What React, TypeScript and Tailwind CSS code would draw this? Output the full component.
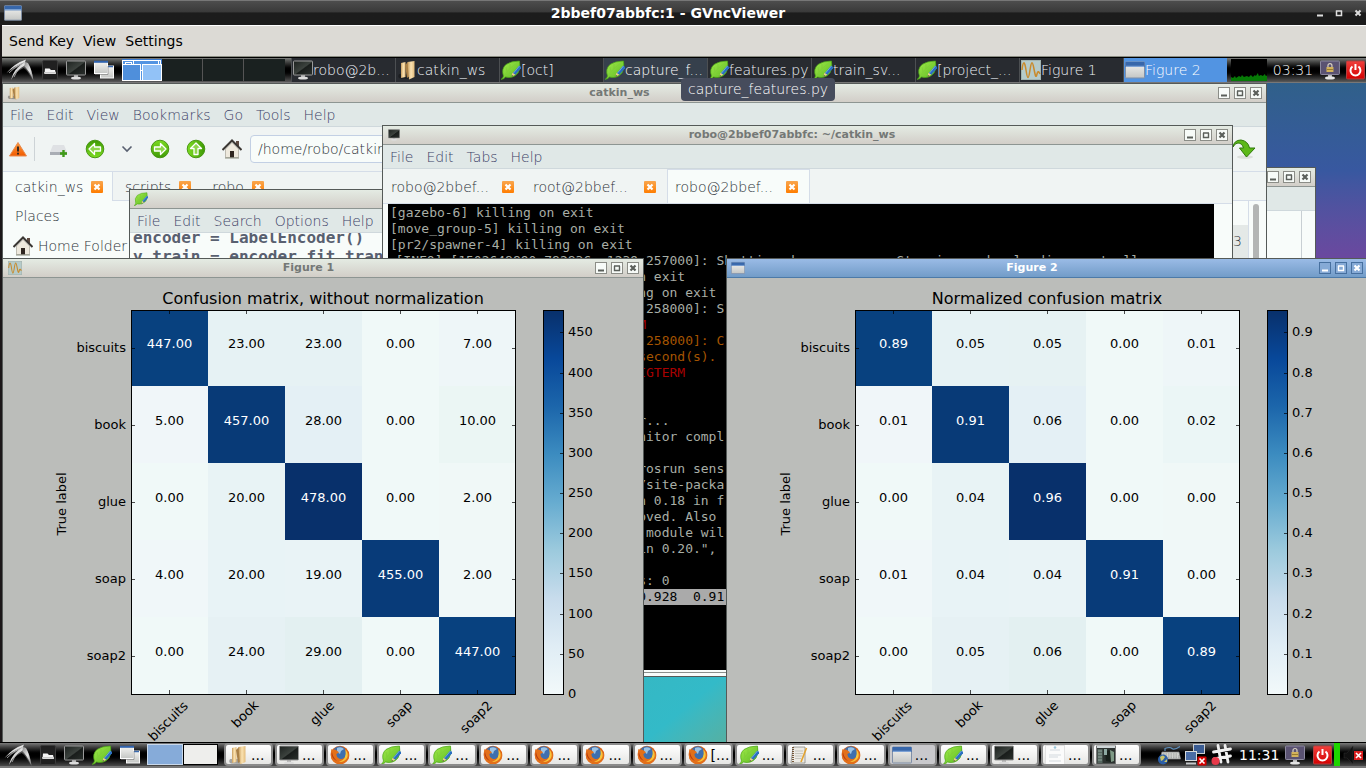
import React from "react";

type IconProps = { className?: string };

function Defs() {
  return (
    <svg className="absolute h-0 w-0" aria-hidden="true">
      <defs>
        <linearGradient id="metal" x1="0" y1="0" x2="1" y2="1">
          <stop offset="0" stopColor="#8a8a8a" />
          <stop offset="0.5" stopColor="#e6e6e6" />
          <stop offset="1" stopColor="#777" />
        </linearGradient>
        <linearGradient id="screen" x1="0" y1="0" x2="1" y2="1">
          <stop offset="0" stopColor="#1c211e" />
          <stop offset="0.5" stopColor="#3c423e" />
          <stop offset="0.55" stopColor="#191d1b" />
          <stop offset="1" stopColor="#2b302d" />
        </linearGradient>
        <linearGradient id="paper" x1="0" y1="0" x2="0" y2="1">
          <stop offset="0" stopColor="#f4f4f2" />
          <stop offset="1" stopColor="#c4c6c4" />
        </linearGradient>
        <linearGradient id="leaf" x1="0" y1="0" x2="1" y2="1">
          <stop offset="0" stopColor="#a6ee4e" />
          <stop offset="1" stopColor="#57b81e" />
        </linearGradient>
        <linearGradient id="folder" x1="0" y1="0" x2="1" y2="0">
          <stop offset="0" stopColor="#c79c5c" />
          <stop offset="0.5" stopColor="#fbe3b2" />
          <stop offset="1" stopColor="#e3bc7c" />
        </linearGradient>
        <linearGradient id="greenball" x1="0" y1="0" x2="0" y2="1">
          <stop offset="0" stopColor="#3f9a05" />
          <stop offset="1" stopColor="#7ddc22" />
        </linearGradient>
        <linearGradient id="warn" x1="0" y1="0" x2="0" y2="1">
          <stop offset="0" stopColor="#ff9a3c" />
          <stop offset="1" stopColor="#f05a00" />
        </linearGradient>
        <linearGradient id="orange" x1="0" y1="0" x2="0" y2="1">
          <stop offset="0" stopColor="#f9a64e" />
          <stop offset="1" stopColor="#ff7d00" />
        </linearGradient>
        <linearGradient id="red" x1="0" y1="0" x2="0" y2="1">
          <stop offset="0" stopColor="#f0403c" />
          <stop offset="1" stopColor="#d40000" />
        </linearGradient>
        <linearGradient id="blues" x1="0" y1="0" x2="0" y2="1">
          <stop offset="0" stopColor="#08306b" />
          <stop offset="0.125" stopColor="#08489a" />
          <stop offset="0.25" stopColor="#1c66ab" />
          <stop offset="0.375" stopColor="#3c8cc0" />
          <stop offset="0.5" stopColor="#67acd0" />
          <stop offset="0.625" stopColor="#9ccadd" />
          <stop offset="0.75" stopColor="#c8dcec" />
          <stop offset="0.875" stopColor="#e0edf5" />
          <stop offset="1" stopColor="#f2f9fa" />
        </linearGradient>
      </defs>
    </svg>
  );
}

const Swallow = ({ className = "h-6 w-7" }: IconProps) => (
  <svg className={className} viewBox="0 0 28 24" aria-hidden="true">
    <path d="M20 1.500Q9 5 0.500 15Q6 11 12 9.500Q7 14 5 22Q10 13 17.500 10Q20 11 23 16L27.500 23Q26 10 21.500 5Z" fill="#4f4f4f" />
    <path d="M20 1.500Q9 5 0.500 15Q8 8 19 4Z" fill="url(#metal)" />
    <path d="M19 4Q8 10 5 22Q10 11 20 7Z" fill="url(#metal)" />
    <path d="M19 4L22 5Q26 12 27.500 23Q23 12 18 8Z" fill="url(#metal)" />
    <path d="M3 15Q9 8 19 4M8 19Q12 10 19 6" stroke="#d8d8d8" strokeWidth="0.700" fill="none" />
  </svg>
);

const FileManager = ({ className = "h-5 w-4" }: IconProps) => (
  <svg className={className} viewBox="0 0 16 20" aria-hidden="true">
    <rect x="0.500" y="0.500" width="15" height="19" rx="1.500" fill="#202020" stroke="#3b3b3b" />
    <path d="M3 8.500h4.500l1.500 1.500h4l1 4H2.500z" fill="#f4f4f4" />
    <path d="M2 12.800h12" stroke="#c8c8c8" strokeWidth="1.500" />
  </svg>
);

const Monitor = ({ className = "h-5 w-5" }: IconProps) => (
  <svg className={className} viewBox="0 0 20 20" aria-hidden="true">
    <rect x="0.500" y="1" width="19" height="14" rx="0.800" fill="url(#screen)" stroke="#9a9a9a" />
    <path d="M8 15h4v2.500H8z" fill="#aaa" />
    <ellipse cx="10" cy="18" rx="5" ry="1.600" fill="#dcdcdc" />
  </svg>
);

const LockScreen = ({ className = "h-5 w-5" }: IconProps) => (
  <svg className={className} viewBox="0 0 20 20" aria-hidden="true">
    <rect x="0.500" y="1" width="19" height="13.500" rx="0.800" fill="#5a5272" stroke="#8d8aa0" />
    <path d="M8 15h4v2.500H8z" fill="#bbb" />
    <ellipse cx="10" cy="18" rx="5" ry="1.600" fill="#e4e4e4" />
    <path d="M8 7.500V5.500a2 2 0 0 1 4 0v2" fill="none" stroke="#d9d2c0" strokeWidth="1.200" />
    <rect x="6.500" y="7" width="7" height="5" fill="#d3b35c" />
    <path d="M7 9.500h6" stroke="#8a6c22" strokeWidth="0.800" />
  </svg>
);

const Windows = ({ className = "h-5 w-5" }: IconProps) => (
  <svg className={className} viewBox="0 0 20 20" aria-hidden="true">
    <rect x="6.500" y="6" width="13" height="12" fill="url(#paper)" stroke="#fafafa" />
    <path d="M7 6.500h12" stroke="#3a6ab0" strokeWidth="1.500" />
    <rect x="0.500" y="1.500" width="13" height="12" fill="url(#paper)" stroke="#fdfdfd" />
    <path d="M0 1.800h14" stroke="#2f62ad" strokeWidth="2" />
    <path d="M1 14.500h13V6" stroke="#777" fill="none" strokeWidth="0.600" />
  </svg>
);

const AppWindow = ({ className = "h-5 w-5" }: IconProps) => (
  <svg className={className} viewBox="0 0 20 20" aria-hidden="true">
    <rect x="0.500" y="2" width="19" height="16" rx="0.600" fill="url(#paper)" stroke="#7f8fa8" />
    <rect x="0.500" y="2" width="19" height="5" fill="#3767ab" />
    <path d="M1 6.300h18" stroke="#8fb2e0" />
  </svg>
);

const Leaf = ({ className = "h-5 w-5" }: IconProps) => (
  <svg className={className} viewBox="0 0 20 20" aria-hidden="true">
    <path d="M0 19.500Q2 18 2.500 16Q0 9 5 4.500Q10 1 18.500 1Q20 8 17 13Q12 19 4.500 17Q3 19 0 19.500Z" fill="url(#leaf)" stroke="#49a315" strokeWidth="0.700" />
    <path d="M3 16Q7 9 17 2M6 12L5 7M9 9V4M8 12h6M5.500 14.500h5" stroke="#7fcb38" strokeWidth="0.700" fill="none" />
    <path d="M19.500 6.500L13 14" stroke="#2b6fc2" strokeWidth="3" />
    <path d="M18.500 6L12.500 13" stroke="#79aee8" strokeWidth="0.800" />
    <path d="M11.500 12.800L10.500 16.500L14.200 14.800Z" fill="#eccb92" />
    <path d="M10.500 16.500l.5-1.600 1.100 1z" fill="#333" />
  </svg>
);

const Folder = ({ className = "h-5 w-5" }: IconProps) => (
  <svg className={className} viewBox="0 0 20 20" aria-hidden="true">
    <path d="M2 14Q0 17 3 18.500L14 19V14Z" fill="#000" opacity="0.300" />
    <path d="M4 3L8.500 2V17L4 18Z" fill="url(#folder)" />
    <path d="M8 5l3-3 2 14-3 2z" fill="#a98046" />
    <path d="M10.500 2L17.500 1V17L12 19.500Z" fill="url(#folder)" />
  </svg>
);

const Sine = ({ className = "h-5 w-5" }: IconProps) => (
  <svg className={className} viewBox="0 0 20 20" aria-hidden="true">
    <rect x="0.500" y="0.500" width="19" height="19" fill="#b5cbca" stroke="#a3b4b0" />
    <path d="M1 10C2 1 3.500 0 5 10S7.500 20 9 10S11.500 1 13 9S15 18 16 14S18 12 19 14" stroke="#c98a2b" strokeWidth="1.500" fill="none" />
  </svg>
);

const Power = ({ className = "h-5 w-5" }: IconProps) => (
  <svg className={className} viewBox="0 0 20 20" aria-hidden="true">
    <rect x="0.500" y="1" width="18" height="18" rx="1" fill="url(#red)" stroke="#b34140" />
    <path d="M6.500 6.500a5 5 0 1 0 6 0" stroke="#fff" strokeWidth="2" fill="none" />
    <path d="M9.500 4v6" stroke="#fff" strokeWidth="2" />
  </svg>
);

const Firefox = ({ className = "h-5 w-5" }: IconProps) => (
  <svg className={className} viewBox="0 0 20 20" aria-hidden="true">
    <circle cx="10" cy="10" r="9.300" fill="#dd6312" />
    <circle cx="9.600" cy="8" r="6.800" fill="#3f6fae" />
    <path d="M7 3q4-2 7 1l-3 2-1 3-3-2z" fill="#9cc4e6" />
    <path d="M1.500 4Q3 5 5 4.500Q8 6 9 7.500L6.500 9Q6 12 9 13.500Q13 15 15.500 12Q17 8 15 4Q20 8 19 12.500Q16 19 9.500 19.200Q2 18 1 11Q.5 7 1.500 4Z" fill="#e3701a" />
    <path d="M15.500 4.500Q19 9 17 13Q14 17.500 9 17Q17 15 15.500 4.500Z" fill="#f8c53a" />
    <path d="M2 7Q3 13 7 16Q2 14 1.500 9Z" fill="#b93b10" />
  </svg>
);

const Notepad = ({ className = "h-5 w-5" }: IconProps) => (
  <svg className={className} viewBox="0 0 20 20" aria-hidden="true">
    <path d="M3 2h12v16H1z" fill="#eceae4" stroke="#8b8b86" strokeWidth="0.800" />
    <path d="M3 2v16" stroke="#6b4a2a" strokeWidth="1.800" strokeDasharray="1 1" />
    <path d="M5 6h8M5 8.500h8M5 11h7M5 13.500h6" stroke="#bcbcb4" strokeWidth="0.800" />
    <path d="M16.500 3L11 17" stroke="#e2a32f" strokeWidth="1.600" />
  </svg>
);

const PageDoc = ({ className = "h-5 w-5" }: IconProps) => (
  <svg className={className} viewBox="0 0 20 20" aria-hidden="true">
    <rect x="0.500" y="0.500" width="19" height="19" fill="#fbfbfb" stroke="#e2e2e2" />
    <circle cx="10" cy="2.500" r="1.300" fill="#9cc8dc" />
    <path d="M5 5h10M4 10h12M4 12h9M4 16h12" stroke="#c3ccd2" strokeWidth="0.700" />
  </svg>
);

const Viewer = ({ className = "h-5 w-5" }: IconProps) => (
  <svg className={className} viewBox="0 0 20 20" aria-hidden="true">
    <rect x="0.500" y="1" width="19" height="18" fill="#2c3230" stroke="#777" />
    <path d="M1 2h18" stroke="#cfd6d8" strokeWidth="2" />
    <path d="M1.500 4h5v14h-5z" fill="#55665f" />
    <path d="M2 6h4M2 9h4M2 12h4M2 15h4" stroke="#9fb3aa" strokeWidth="0.800" />
    <path d="M9 7l4-2 3 3-1 9-5-1z" fill="#18201b" />
    <path d="M14 5l4 2v9l-3 1z" fill="#7f9a86" />
    <path d="M8 4h3v6H8z" fill="#8ea9a2" />
  </svg>
);

const Keyboard = ({ className = "h-5 w-6" }: IconProps) => (
  <svg className={className} viewBox="0 0 24 20" aria-hidden="true">
    <path d="M8 6V3.500q5-2 7 0t8-2" stroke="#5f8fbd" strokeWidth="1.200" fill="none" />
    <path d="M5 7h17l1.500 7H3z" fill="#cfd1cd" stroke="#888" strokeWidth="0.700" />
    <path d="M6 9h15M6 11h16M6 12.800h17" stroke="#8a8a8a" strokeWidth="0.700" strokeDasharray="1.500 1" />
    <circle cx="6" cy="14.500" r="5" fill="#2b5ea6" />
    <path d="M3 12q3-3 5 0l-2 3-2 1zM7 17l3-3 0 3z" fill="#c9c46a" />
  </svg>
);

const Network = ({ className = "h-6 w-6" }: IconProps) => (
  <svg className={className} viewBox="0 0 24 24" aria-hidden="true">
    <rect x="10.500" y="1.500" width="11" height="9" fill="#3a5c93" stroke="#c9cdd0" />
    <rect x="2.500" y="8.500" width="11" height="9" fill="#4a6da6" stroke="#d5d9dc" />
    <path d="M3 19.500h10v2H3z" fill="#c6c9cb" />
    <rect x="14.500" y="13.500" width="9" height="9" rx="1" fill="#d40000" />
    <path d="M16.500 15.500l5 5M21.500 15.500l-5 5" stroke="#fff" strokeWidth="1.600" />
  </svg>
);

const Hash = ({ className = "h-6 w-6" }: IconProps) => (
  <svg className={className} viewBox="0 0 24 24" aria-hidden="true">
    <path d="M9 2.500l3 16.500M16 2.500l3 16.500M4.500 9l17-3M5 16l16.500-3" stroke="#efefef" strokeWidth="2.800" strokeLinecap="round" />
    <circle cx="6.500" cy="18" r="4" fill="#e8394a" />
  </svg>
);

const Muted = ({ className = "h-5 w-5" }: IconProps) => (
  <svg className={className} viewBox="0 0 20 20" aria-hidden="true">
    <path d="M1 8h3l6-7v18l-6-6H1z" fill="#101010" stroke="#333" strokeWidth="0.500" />
    <rect x="11" y="6" width="9" height="9" fill="#d81e1e" />
    <path d="M13 8l5 5M18 8l-5 5" stroke="#fff" strokeWidth="1.600" />
  </svg>
);

const House = ({ className = "h-5 w-5" }: IconProps) => (
  <svg className={className} viewBox="0 0 20 20" aria-hidden="true">
    <path d="M14 2h3v6l-3-3z" fill="#5f4a40" />
    <path d="M3.500 10L10 3.500L16.500 10V18.500H3.500Z" fill="#eee9dd" stroke="#a8a498" strokeWidth="0.700" />
    <path d="M0.500 11L10 1.500L19.500 11" fill="none" stroke="#3a3632" strokeWidth="2" />
    <rect x="8" y="12" width="4" height="6.500" fill="#2f2620" />
    <path d="M3 19h14" stroke="#8b8f80" />
  </svg>
);

function RoundArrow({ turn = "" }: { turn?: string }) {
  return (
    <svg className={"h-5 w-5 " + turn} viewBox="0 0 20 20" aria-hidden="true">
      <circle cx="10" cy="10" r="8.800" fill="url(#greenball)" stroke="#3f8f0a" strokeWidth="0.900" />
      <path d="M4 10l5.500-5.500v3.500h6v4h-6v3.500z" fill="#8fd64a" stroke="#fff" strokeWidth="1.300" strokeLinejoin="round" />
    </svg>
  );
}

const Warning = () => (
  <svg className="h-5 w-5" viewBox="0 0 20 20" aria-hidden="true">
    <path d="M10 3.500L18.500 17H1.500Z" fill="url(#warn)" stroke="#e98a4c" />
    <path d="M10 7.500v5M10 13.800v1.800" stroke="#222" strokeWidth="1.800" />
  </svg>
);

const NewTab = () => (
  <svg className="h-5 w-5" viewBox="0 0 20 20" aria-hidden="true">
    <path d="M4 6h11l3 7H1z" fill="#dfe1e4" />
    <path d="M1 13h17v3H1z" fill="#a9adb4" />
    <path d="M14.500 11v7M11 14.500h7" stroke="#3f9a17" strokeWidth="2.400" />
  </svg>
);

const Chevron = () => (
  <svg className="h-3 w-3" viewBox="0 0 12 12" aria-hidden="true">
    <path d="M1.500 3.500L6 8L10.500 3.500" stroke="#596070" strokeWidth="1.600" fill="none" />
  </svg>
);

const GoArrow = () => (
  <svg className="h-5 w-6" viewBox="0 0 24 20" aria-hidden="true">
    <ellipse cx="13" cy="18" rx="8" ry="1.800" fill="#dcdfdc" />
    <path d="M1 8Q2 1 9 1Q16 2 17.500 9H23L14.500 18L7.500 9H11.500Q10 4 6 4Q3 4 1 8Z" fill="#5cb818" stroke="#2f7a08" />
  </svg>
);

const CloseTab = () => (
  <svg className="h-3 w-3" viewBox="0 0 12 12" aria-hidden="true">
    <rect width="12" height="12" rx="1" fill="url(#orange)" />
    <path d="M3.500 3.500l5 5M8.500 3.500l-5 5" stroke="#fff" strokeWidth="2.200" />
  </svg>
);

const light = "font-['DejaVu_Sans_Light','DejaVu_Sans',sans-serif] font-extralight";

function WindowButtons({ active = false }: { active?: boolean }) {
  const tone = active ? "border-[#47709f] text-white bg-[#86aad6]" : "border-[#8b8d87] text-[#5a5f5a] bg-[#f7fbf8]";
  return (
    <div className="flex gap-1">
      <button aria-label="Minimize" className={"flex h-3 w-3 items-center justify-center border " + tone}>
        <svg viewBox="0 0 10 10" className="h-full w-full"><path d="M2 7.500h6" stroke="currentColor" strokeWidth="2" /></svg>
      </button>
      <button aria-label="Maximize" className={"flex h-3 w-3 items-center justify-center border " + tone}>
        <svg viewBox="0 0 10 10" className="h-full w-full"><path d="M2.500 3v4.500h5V3M2 3h6" stroke="currentColor" fill="none" strokeWidth="1.400" /></svg>
      </button>
      <button aria-label="Close" className={"flex h-3 w-3 items-center justify-center border " + tone}>
        <svg viewBox="0 0 10 10" className="h-full w-full"><path d="M2.500 2.500l5 5M7.500 2.500l-5 5" stroke="currentColor" strokeWidth="2.200" /></svg>
      </button>
    </div>
  );
}

function TitleBar({ title, icon, active = false }: { title: string; icon: React.ReactNode; active?: boolean }) {
  return (
    <div
      className={
        "flex h-[19px] shrink-0 items-center border-b pr-1 pl-1 font-['DejaVu_Sans',sans-serif] text-[11px] font-bold " +
        (active
          ? "border-[#4c7aa8] bg-linear-to-b from-[#9abbe6] to-[#729cc8] text-white"
          : "border-[#8d9592] bg-linear-to-b from-[#e4ebe3] to-[#d2cec8] text-[#747876]")
      }
    >
      {icon}
      <div className="flex-1 truncate text-center leading-4">{title}</div>
      <WindowButtons active={active} />
    </div>
  );
}

function MenuBar({ items }: { items: string[] }) {
  return (
    <div className={"flex h-6 shrink-0 items-center gap-[13px] border-b border-[#cfd8dc] bg-[#e0e8e7] px-[7px] text-sm text-[#3c4166] " + light}>
      {items.map((m) => (
        <button key={m}>{m}</button>
      ))}
    </div>
  );
}

function LauncherTask({ icon, label, tone = "bg-[#282b30] text-[#eef3f8]" }: { icon: React.ReactNode; label: string; tone?: string }) {
  return (
    <button className={"flex min-w-0 flex-1 items-center border-l border-[#4c4f52] pl-px text-left text-sm " + tone}>
      <span className="shrink-0">{icon}</span>
      <span className="whitespace-nowrap">{label}</span>
    </button>
  );
}

function VncPanel() {
  return (
    <div className={"relative z-10 flex h-[26px] shrink-0 items-stretch border-t border-b border-t-black border-b-[#777] bg-linear-to-b from-[#7a7c7a] via-black via-50% to-[#5a5a5a] " + light}>
      <div className="flex w-[120px] items-center gap-2 pl-1">
        <Swallow />
        <FileManager />
        <Monitor />
        <Windows />
      </div>
      <div className="my-px flex">
        <svg className="h-[22px] w-10 bg-[#3b7bd0]" viewBox="0 0 40 22" aria-label="Desktop 1">
          <rect x="0.500" y="1.500" width="38" height="20" fill="#5294e2" stroke="#fff" />
          <rect x="11.500" y="1.500" width="25" height="10" fill="#5294e2" stroke="#fff" />
          <rect x="3.500" y="3.500" width="6" height="4" fill="#5294e2" stroke="#fff" />
          <rect x="0.500" y="5.500" width="18" height="16" fill="#4f8fdb" stroke="#fff" />
          <rect x="20.500" y="5.500" width="19" height="16" fill="#92c2f7" stroke="#fff" />
        </svg>
        <div className="w-[41px] border-r border-[#555] bg-[#1a2120]" />
        <div className="w-[41px] border-r border-[#555] bg-[#1a2120]" />
        <div className="w-[41px] bg-[#1a2120]" />
      </div>
      <div className="ml-[6px] flex flex-1">
        <LauncherTask icon={<Monitor />} label="robo@2b..." />
        <LauncherTask icon={<Folder />} label="catkin_ws" />
        <LauncherTask icon={<Leaf />} label="[oct]" />
        <LauncherTask icon={<Leaf />} label="capture_f..." tone="bg-[#36404c] text-white" />
        <LauncherTask icon={<Leaf />} label="features.py" />
        <LauncherTask icon={<Leaf />} label="train_sv..." />
        <LauncherTask icon={<Leaf />} label="[project_..." />
        <LauncherTask icon={<Sine />} label="Figure 1" />
        <LauncherTask icon={<AppWindow />} label="Figure 2" tone="bg-[#5294e2] text-white" />
      </div>
      <div className="flex w-[139px] items-center gap-[6px] pl-1 text-sm text-white">
        <svg className="h-[22px] w-9 bg-black" viewBox="0 0 36 22" aria-label="CPU usage">
          <path d="M0 22V18l2 1 2-2 1 2 3-2 2 1 1-2 2 2 3-1 2 1 2-2 2 2 2-2 1 1 2-3 1 3 2-1 2 1 2-2 1 2 2-1V22Z" fill="#067a06" />
        </svg>
        <span>03:31</span>
        <LockScreen className="ml-px h-5 w-5" />
        <Power />
      </div>
      <div className="absolute top-5 left-[679px] rounded-sm bg-[#464c5c] px-[7px] text-sm leading-[23px] text-white">
        capture_features.py
      </div>
    </div>
  );
}

type TermLine = { lead?: string; text: string; tone?: string };

const terminalLines: TermLine[] = [
  { text: "[gazebo-6] killing on exit" },
  { text: "[move_group-5] killing on exit" },
  { text: "[pr2/spawner-4] killing on exit" },
  { lead: "[INFO] [1502648890.782836, 1239.", text: "257000]: Shutting down spawner. Stopping and unloading controllers" },
  { lead: "n", text: " exit" },
  { lead: "n", text: "g on exit" },
  { lead: ".", text: "258000]: S" },
  { lead: "M", text: "", tone: "text-[#a80000]" },
  { lead: ".", text: "258000]: C", tone: "text-[#a55400]" },
  { lead: "s", text: "econd(s).", tone: "text-[#a55400]" },
  { lead: "I", text: "GTERM", tone: "text-[#a80000]" },
  { text: "" },
  { text: "" },
  { lead: "r", text: "..." },
  { lead: "n", text: "itor compl" },
  { text: "" },
  { lead: "r", text: "osrun sens" },
  { lead: "/", text: "site-packa" },
  { lead: "n", text: " 0.18 in f" },
  { lead: "o", text: "ved. Also " },
  { lead: " ", text: "module wil" },
  { lead: "i", text: "n 0.20.\"," },
  { text: "" },
  { lead: "s", text: ": 0" },
  { lead: "0", text: ".928  0.91", tone: "bg-[#aaaaaa] text-black" },
];

function Terminal() {
  return (
    <section className="absolute top-[42px] left-[380px] flex h-[552px] w-[851px] flex-col border border-[#555a58] bg-[#f8fcfa]">
      <TitleBar title="robo@2bbef07abbfc: ~/catkin_ws" icon={<Monitor className="ml-px h-3 w-3" />} />
      <MenuBar items={["File", "Edit", "Tabs", "Help"]} />
      <div className={"flex h-[35px] shrink-0 items-stretch border-b border-[#d5dde8] bg-[#f0f4f3] text-sm text-[#2c3238] " + light}>
        <div className="flex w-[142px] items-center justify-between pt-[2px] pr-[11px] pl-2">
          <button>robo@2bbef...</button>
          <button aria-label="Close tab"><CloseTab /></button>
        </div>
        <div className="flex w-[142px] items-center justify-between pt-[2px] pr-[11px] pl-2">
          <button>root@2bbef...</button>
          <button aria-label="Close tab"><CloseTab /></button>
        </div>
        <div className="flex w-[143px] items-center justify-between border border-b-0 border-[#d5dde8] bg-[#f8fcfa] pr-[11px] pl-[7px]">
          <button>robo@2bbef...</button>
          <button aria-label="Close tab"><CloseTab /></button>
        </div>
      </div>
      <pre className="mr-[18px] ml-[5px] h-[466px] overflow-hidden bg-black pt-px pl-[2px] font-['DejaVu_Sans_Mono',monospace] text-[13px] leading-4 text-[#a8aea6]">
        {terminalLines.map((l, i) => (
          <div key={i} className={"flex h-4 " + (l.tone ?? "")}>
            {l.lead !== undefined && <span className="w-64 shrink-0 text-right">{l.lead}</span>}
            <span>{l.text}</span>
          </div>
        ))}
      </pre>
      <div className="mt-[2px] border-t border-[#8a8f8c]" />
    </section>
  );
}

function Editor() {
  return (
    <section className="absolute top-[106px] left-[127px] h-[300px] w-[400px] border border-[#555a58] bg-[#f8fcfa]">
      <TitleBar title="" icon={<Leaf className="h-[14px] w-[14px]" />} />
      <MenuBar items={["File", "Edit", "Search", "Options", "Help"]} />
      <div className="overflow-hidden">
        <pre className="-mt-[5px] pl-[3px] font-['DejaVu_Sans_Mono',monospace] text-base leading-[19px] font-bold text-[#596070]">
          {"encoder = LabelEncoder()\ny_train = encoder.fit_transform(y_train)"}
        </pre>
      </div>
    </section>
  );
}

function FileManagerWindow() {
  return (
    <section className={"absolute top-0 left-0 flex h-[500px] w-[1265px] flex-col border border-[#555a58] bg-[#f8fcfa] text-sm text-[#2c3238] " + light}>
      <TitleBar title="catkin_ws" icon={<Folder className="h-[14px] w-[14px]" />} />
      <MenuBar items={["File", "Edit", "View", "Bookmarks", "Go", "Tools", "Help"]} />
      <div className="flex h-[45px] shrink-0 items-center border-b border-[#d5dde8] bg-[#f0f4f3] pr-[10px] pl-[5px]">
        <button aria-label="Root warning"><Warning /></button>
        <div className="mx-[6px] h-6 w-px bg-[#cdd3d6]" />
        <button aria-label="New tab" className="ml-2"><NewTab /></button>
        <button aria-label="Back" className="ml-4"><RoundArrow /></button>
        <button aria-label="History" className="ml-4"><Chevron /></button>
        <button aria-label="Forward" className="ml-[17px]"><RoundArrow turn="rotate-180" /></button>
        <button aria-label="Up" className="ml-4"><RoundArrow turn="rotate-90" /></button>
        <button aria-label="Home" className="ml-4"><House /></button>
        <input aria-label="Location" defaultValue="/home/robo/catkin_ws" className="ml-2 h-7 min-w-0 flex-1 rounded-sm border border-[#c3d0e4] bg-[#f8fcfa] px-[7px]" />
        <button aria-label="Go" className="ml-2"><GoArrow /></button>
      </div>
      <div className="flex h-[29px] shrink-0 bg-[#f0f4f3]">
        <div className="flex w-[110px] items-center justify-between border-r border-[#d5dde8] bg-[#f8fcfa] pr-[9px] pl-3">
          <button>catkin_ws</button>
          <button aria-label="Close tab"><CloseTab /></button>
        </div>
        <div className="flex items-center gap-2 border-b border-[#d5dde8] pt-px pl-3">
          <button>scripts</button>
          <button aria-label="Close tab"><CloseTab /></button>
        </div>
        <div className="flex flex-1 items-center gap-2 border-b border-[#d5dde8] pt-px pl-[21px]">
          <button>robo</button>
          <button aria-label="Close tab"><CloseTab /></button>
        </div>
      </div>
      <div className="flex flex-1">
        <div className="flex-1">
          <div className="pl-3 leading-[30px]">Places</div>
          <button className="flex h-[30px] items-center gap-[5px] pl-[10px]">
            <House />
            Home Folder
          </button>
        </div>
        <div className="w-[16px] pl-px">
          <div className="h-6" />
          <div className="h-10 bg-[#e4e9e7] leading-[32px]">3</div>
        </div>
        <div className="w-[18px] border-l border-[#d5dde8] pt-[3px] pl-1">
          <div className="h-60 w-[6px] rounded-full bg-[#b3b5b4]" />
        </div>
      </div>
    </section>
  );
}

function BackWindow() {
  return (
    <section className="absolute top-[84px] left-[900px] flex h-[300px] w-[414px] flex-col border border-[#555a58] bg-[#f8fcfa]">
      <TitleBar title="" icon={<Leaf className="h-[14px] w-[14px]" />} />
      <MenuBar items={[]} />
      <div className="mr-[13px] flex-1 border-r border-[#c8cfd3]" />
    </section>
  );
}

type Cell = { v: string; c: string };
type Figure = { title: string; cells: Cell[][]; ticks: { label: string; y: number }[] };

const labels = ["biscuits", "book", "glue", "soap", "soap2"];
const labelDrop = [22, 15, 14, 15, 18];

const W = "#f0f9f8";
const figure1: Figure = {
  title: "Confusion matrix, without normalization",
  cells: [
    [{ v: "447.00", c: "#08417f" }, { v: "23.00", c: "#e6f2f4" }, { v: "23.00", c: "#e6f2f4" }, { v: "0.00", c: W }, { v: "7.00", c: "#eef6f8" }],
    [{ v: "5.00", c: "#f0f6f9" }, { v: "457.00", c: "#083a77" }, { v: "28.00", c: "#e4f0f5" }, { v: "0.00", c: W }, { v: "10.00", c: "#ebf6f4" }],
    [{ v: "0.00", c: W }, { v: "20.00", c: "#e8f3f5" }, { v: "478.00", c: "#08306b" }, { v: "0.00", c: W }, { v: "2.00", c: "#f0f8f7" }],
    [{ v: "4.00", c: "#f0f7f9" }, { v: "20.00", c: "#e8f3f6" }, { v: "19.00", c: "#e9f3f6" }, { v: "455.00", c: "#083b79" }, { v: "2.00", c: "#f0f8f8" }],
    [{ v: "0.00", c: W }, { v: "24.00", c: "#e6f1f4" }, { v: "29.00", c: "#e3f0f1" }, { v: "0.00", c: W }, { v: "447.00", c: "#08417f" }],
  ],
  ticks: [450, 400, 350, 300, 250, 200, 150, 100, 50, 0].map((n) => ({ label: String(n), y: Math.round(416 - (n * 384) / 478) })),
};

const figure2: Figure = {
  title: "Normalized confusion matrix",
  cells: [
    [{ v: "0.89", c: "#08417f" }, { v: "0.05", c: "#e6f2f4" }, { v: "0.05", c: "#e6f2f3" }, { v: "0.00", c: W }, { v: "0.01", c: "#eef6f8" }],
    [{ v: "0.01", c: "#f0f6f9" }, { v: "0.91", c: "#083a77" }, { v: "0.06", c: "#e4f0f5" }, { v: "0.00", c: W }, { v: "0.02", c: "#ebf6f6" }],
    [{ v: "0.00", c: W }, { v: "0.04", c: "#e8f3f5" }, { v: "0.96", c: "#08306b" }, { v: "0.00", c: W }, { v: "0.00", c: "#f0f8f7" }],
    [{ v: "0.01", c: "#f0f7f9" }, { v: "0.04", c: "#e8f3f6" }, { v: "0.04", c: "#e9f3f6" }, { v: "0.91", c: "#083b79" }, { v: "0.00", c: "#f0f8f8" }],
    [{ v: "0.00", c: W }, { v: "0.05", c: "#e6f1f4" }, { v: "0.06", c: "#e3f0f1" }, { v: "0.00", c: W }, { v: "0.89", c: "#08417f" }],
  ],
  ticks: [9, 8, 7, 6, 5, 4, 3, 2, 1, 0].map((n) => ({ label: (n / 10).toFixed(1), y: Math.round(416 - (n * 38.4) / 0.956) })),
};

function Matrix({ figure }: { figure: Figure }) {
  return (
    <svg className="h-[465px] w-[640px] shrink-0 font-['DejaVu_Sans',sans-serif] text-[13px]" viewBox="0 0 640 465" role="img" aria-label={figure.title}>
      <text x="320" y="26" textAnchor="middle" className="text-base">{figure.title}</text>
      {figure.cells.map((row, r) =>
        row.map((cell, c) => (
          <g key={r + "-" + c}>
            <rect x={128 + c * 77} y={31 + r * 77} width="77" height="77" fill={cell.c} shapeRendering="crispEdges" />
            <text x={166.5 + c * 77} y={70 + r * 77} textAnchor="middle" fill={r === c ? "#fff" : "#000"}>{cell.v}</text>
          </g>
        ))
      )}
      <path d="M127 30h386v2H127z" fill="#bbbdba" />
      <rect x="128.500" y="32.500" width="384" height="384" fill="none" stroke="#000" />
      {labels.map((l, i) => (
        <g key={l}>
          <path
            d={`M${166.5 + i * 77} 32v4M${166.5 + i * 77} 416v-4M128 ${70.5 + i * 77}h4M513 ${70.5 + i * 77}h-4`}
            stroke="#000"
            strokeWidth="0.700"
          />
          <text x="123" y={74 + i * 77} textAnchor="end">{l}</text>
          <text
            transform={`translate(${165 + i * 77} ${421 + labelDrop[i]}) rotate(-45)`}
            textAnchor="middle"
            dominantBaseline="central"
          >
            {l}
          </text>
        </g>
      ))}
      <text transform="translate(63 226) rotate(-90)" textAnchor="middle">True label</text>
      <rect x="540.500" y="32.500" width="20" height="384" fill="url(#blues)" stroke="#000" />
      {figure.ticks.map((t) => (
        <g key={t.label}>
          <path d={`M561 ${t.y + 0.5}h-4`} stroke="#000" strokeWidth="0.700" />
          <text x="565" y={t.y + 4}>{t.label}</text>
        </g>
      ))}
    </svg>
  );
}

function FigureWindow({ name, icon, figure, active, place }: { name: string; icon: React.ReactNode; figure: Figure; active?: boolean; place: string }) {
  return (
    <section className={"absolute top-[175px] bottom-0 flex flex-col overflow-hidden border border-b-0 border-[#555a58] bg-[#bbbdba] " + place}>
      <TitleBar title={name} icon={icon} active={active} />
      <Matrix figure={figure} />
    </section>
  );
}

function HostTask({ icon, label = "...", pressed = false }: { icon: React.ReactNode; label?: string; pressed?: boolean }) {
  return (
    <button
      className={
        "flex min-w-0 flex-1 items-center gap-[3px] overflow-hidden rounded border-2 border-[#8b8b8b] pl-[2px] text-left text-sm text-black " +
        (pressed ? "bg-[#c9c9cc]" : "bg-linear-to-b from-white to-[#e6e6e4]")
      }
    >
      <span className="shrink-0">{icon}</span>
      <span className="whitespace-nowrap">{label}</span>
    </button>
  );
}

function HostTaskbar() {
  return (
    <footer className="flex h-[26px] shrink-0 items-stretch border-t border-b-2 border-t-black border-b-[#777] bg-linear-to-b from-[#7a7a7a] via-black via-50% to-[#4a4a4a]">
      <div className="flex w-[147px] items-center gap-2 pl-1">
        <Swallow />
        <FileManager />
        <Monitor />
        <Leaf />
        <Windows />
      </div>
      <div className="my-px mr-[6px] flex">
        <div className="w-9 border border-[#c9d8ea] bg-[#86abd9]" />
        <div className="w-[35px] border border-black bg-[#eeeeec]" />
      </div>
      <div className="flex flex-1 gap-[2px]">
        <HostTask icon={<Folder />} />
        <HostTask icon={<Monitor />} />
        <HostTask icon={<Firefox />} />
        <HostTask icon={<Leaf />} />
        <HostTask icon={<Leaf />} />
        <HostTask icon={<Firefox />} />
        <HostTask icon={<Firefox />} />
        <HostTask icon={<Firefox />} />
        <HostTask icon={<Firefox />} />
        <HostTask icon={<Firefox />} label="[..." />
        <HostTask icon={<Leaf />} />
        <HostTask icon={<Notepad />} />
        <HostTask icon={<Firefox />} />
        <HostTask icon={<AppWindow />} pressed />
        <HostTask icon={<Leaf />} />
        <HostTask icon={<Monitor />} />
        <HostTask icon={<PageDoc />} />
        <HostTask icon={<Viewer />} />
      </div>
      <div className="flex w-[225px] shrink-0 items-center pl-4 text-sm text-white">
        <Keyboard />
        <Network className="ml-[2px] h-6 w-6" />
        <Hash className="ml-[2px] h-6 w-6" />
        <span className="ml-[6px]">11:31</span>
        <LockScreen className="ml-[6px] h-5 w-5" />
        <Power className="ml-2 h-5 w-5" />
        <span className="ml-px h-full w-[6px] bg-[#1fd400]" />
        <Muted className="ml-[3px] h-5 w-5" />
      </div>
    </footer>
  );
}

export default function App() {
  return (
    <div className="flex h-screen min-h-[480px] w-full flex-col overflow-hidden bg-[#1b1719] font-['DejaVu_Sans',sans-serif] text-black">
      <Defs />
      <header className="flex h-[25px] shrink-0 items-center border-t border-t-[#777] bg-linear-to-b from-[#4d4d4d] from-0% via-[#3a3a3a] via-45% to-[#1c1c1c] to-50% pl-1 text-white">
        <AppWindow className="h-[18px] w-[18px]" />
        <h1 className="flex-1 text-center text-sm leading-5 font-bold">2bbef07abbfc:1 - GVncViewer</h1>
        <div className="flex gap-[7px] pr-[2px]">
          <button aria-label="Minimize"><svg className="h-3 w-3" viewBox="0 0 12 12"><path d="M3 8.500h6" stroke="#ddd" strokeWidth="2" /></svg></button>
          <button aria-label="Maximize"><svg className="h-3 w-3" viewBox="0 0 12 12"><path d="M3.500 3.500v5h5v-5M3 4h6" stroke="#ddd" strokeWidth="1.500" fill="none" /></svg></button>
          <button aria-label="Close"><svg className="h-3 w-3" viewBox="0 0 12 12"><path d="M3.500 3.500l5 5M8.500 3.500l-5 5" stroke="#ddd" strokeWidth="2" /></svg></button>
        </div>
      </header>
      <div className="flex min-h-0 flex-1 flex-col pl-[2px]">
        <nav className="flex h-8 shrink-0 items-center gap-[9px] border-t border-b border-t-white border-b-[#8a8c82] bg-[#dcdad5] pl-[7px] text-sm">
          <button>Send Key</button>
          <button>View</button>
          <button>Settings</button>
        </nav>
        <VncPanel />
        <main className="relative min-h-0 flex-1 overflow-hidden bg-linear-to-br from-[#2cb3cc] to-[#56b0a2]">
          <div className="absolute top-0 right-0 h-44 w-28 bg-linear-to-b from-[#30608a] via-[#3858a0] to-[#6b489f]" />
          <div className="absolute top-[590px] left-[641px] h-[70px] w-[84px] bg-linear-to-br from-[#35b8c4] via-[#33bac8] to-[#55b0a2]" />
          <BackWindow />
          <FileManagerWindow />
          <Editor />
          <Terminal />
          <FigureWindow name="Figure 1" icon={<Sine className="ml-px h-[14px] w-[14px]" />} figure={figure1} place="left-0 w-[642px]" />
          <FigureWindow name="Figure 2" icon={<AppWindow className="h-[14px] w-[14px]" />} figure={figure2} active place="left-[724px] -right-[2px]" />
        </main>
      </div>
      <HostTaskbar />
    </div>
  );
}
